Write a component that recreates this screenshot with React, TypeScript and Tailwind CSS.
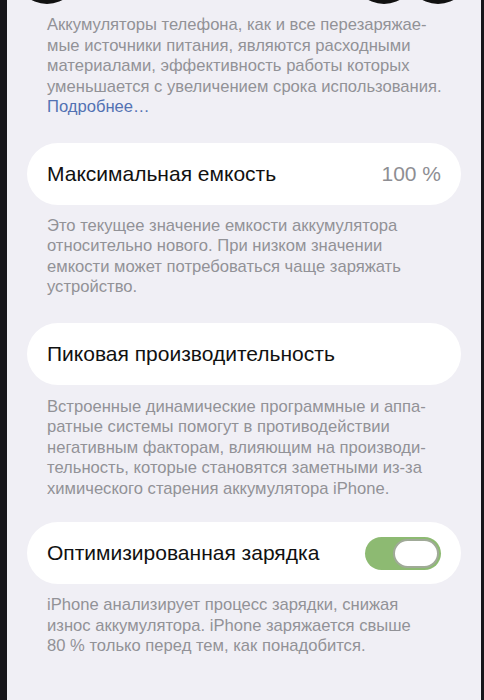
import React from "react";

const font = { fontFamily: '"Liberation Sans", Arial, sans-serif' };

function Footnote({ lines, link }: { lines: string[]; link?: string }) {
  return (
    <p className="whitespace-nowrap pl-[40px] text-[16.6px] leading-[20.5px] text-[#929297]">
      {lines.map((l, i) => (
        <React.Fragment key={i}>
          {l}
          {i < lines.length - 1 && <br />}
        </React.Fragment>
      ))}
      {link && (
        <>
          <br />
          <span className="text-[#5372b3]">{link}</span>
        </>
      )}
    </p>
  );
}

function Card({ children }: { children: React.ReactNode }) {
  return (
    <div className="mx-[20px] flex h-[62px] items-center justify-between rounded-full bg-white px-[20px]">
      {children}
    </div>
  );
}

function Toggle() {
  return (
    <div className="flex h-[33px] w-[76px] items-center justify-end rounded-full bg-[#8dba72] pr-[2px]">
      <div className="h-[29px] w-[46px] rounded-full border-[2px] border-[#a0aa98] bg-white" />
    </div>
  );
}

export default function App() {
  return (
    <div className="flex h-[700px] w-full bg-[#16161a] pl-[7px] pr-[3px]" style={font}>
      <div className="relative flex-1 overflow-hidden bg-[#f0eff5] pt-[15px]">
        {/* bits of the nav buttons cut off at the top */}
        <div className="absolute left-[8px] top-[-60px] h-[64px] w-[64px] rounded-full bg-[#111]" />
        <div className="absolute left-[345px] top-[-60px] h-[64px] w-[64px] rounded-full bg-[#111]" />
        <div className="absolute left-[399px] top-[-60px] h-[64px] w-[64px] rounded-full bg-[#111]" />

        <Footnote
          lines={[
            "Аккумуляторы телефона, как и все перезаряжае-",
            "мые источники питания, являются расходными",
            "материалами, эффективность работы которых",
            "уменьшается с увеличением срока использования.",
          ]}
          link="Подробнее…"
        />

        <div className="mt-[25px]">
          <Card>
            <span className="text-[21px] text-[#111]">Максимальная емкость</span>
            <span className="text-[21px] text-[#8e8e93]">100 %</span>
          </Card>
        </div>
        <div className="mt-[11px]">
          <Footnote
            lines={[
              "Это текущее значение емкости аккумулятора",
              "относительно нового. При низком значении",
              "емкости может потребоваться чаще заряжать",
              "устройство.",
            ]}
          />
        </div>

        <div className="mt-[25px]">
          <Card>
            <span className="text-[21px] text-[#111]">Пиковая производительность</span>
          </Card>
        </div>
        <div className="mt-[12px]">
          <Footnote
            lines={[
              "Встроенные динамические программные и аппа-",
              "ратные системы помогут в противодействии",
              "негативным факторам, влияющим на производи-",
              "тельность, которые становятся заметными из-за",
              "химического старения аккумулятора iPhone.",
            ]}
          />
        </div>

        <div className="mt-[23px]">
          <Card>
            <span className="text-[21px] text-[#111]">Оптимизированная зарядка</span>
            <Toggle />
          </Card>
        </div>
        <div className="mt-[11px]">
          <Footnote
            lines={[
              "iPhone анализирует процесс зарядки, снижая",
              "износ аккумулятора. iPhone заряжается свыше",
              "80 % только перед тем, как понадобится.",
            ]}
          />
        </div>
      </div>
    </div>
  );
}
